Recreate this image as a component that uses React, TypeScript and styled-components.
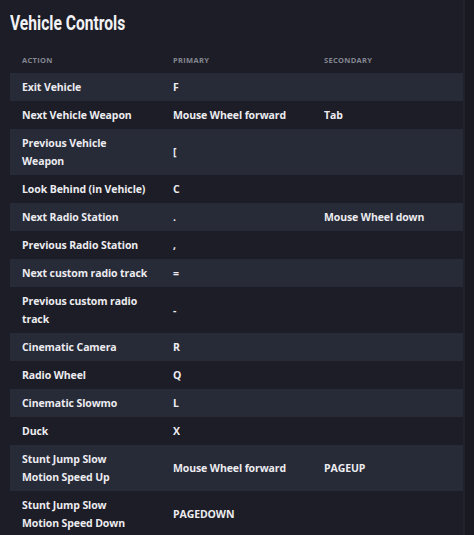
import React from "react";
import styled, { createGlobalStyle } from "styled-components";

const Global = createGlobalStyle`
  html, body { margin: 0; padding: 0; background: #1c1d26; }
  body { width: 474px; height: 535px; overflow: hidden; }
`;

const Page = styled.div`
  display: flex;
  width: 474px;
  height: 535px;
  background: #1c1d26;
  overflow: hidden;
`;

const Main = styled.div`
  width: 463px;
  padding: 10px 0 0 10px;
  box-sizing: border-box;
`;

const Gutter = styled.div`
  flex: 1;
  background: #191a21;
  border-left: 2px solid #21232c;
`;

const Title = styled.h2`
  margin: 0 0 12px 0;
  height: 26px;
  font-family: "Roboto", "DejaVu Sans", sans-serif;
  font-weight: 700;
  font-size: 20px;
  line-height: 26px;
  color: #f2f2f5;
`;

const TitleText = styled.span`
  display: inline-block;
  transform: scaleX(0.78);
  transform-origin: left center;
  white-space: nowrap;
`;

const Table = styled.table`
  width: 453px;
  border-collapse: collapse;
  table-layout: fixed;
  font-family: "Open Sans", "Noto Sans", sans-serif;
`;

const Th = styled.th`
  text-align: left;
  padding: 6px 12px 7px;
  font-size: 7.5px;
  font-weight: 700;
  letter-spacing: 0.3px;
  color: #858792;
  text-transform: uppercase;
  line-height: 12px;
`;

const Row = styled.tr<{ $striped: boolean }>`
  background: ${(p) => (p.$striped ? "#272a37" : "transparent")};
`;

const Td = styled.td`
  padding: 5px 12px;
  font-size: 10.5px;
  font-weight: 700;
  letter-spacing: -0.1px;
  line-height: 18px;
  color: #ececf0;
  vertical-align: middle;
  white-space: pre-line;
`;

const rows: [string, string, string][] = [
  ["Exit Vehicle", "F", ""],
  ["Next Vehicle Weapon", "Mouse Wheel forward", "Tab"],
  ["Previous Vehicle\nWeapon", "[", ""],
  ["Look Behind (in Vehicle)", "C", ""],
  ["Next Radio Station", ".", "Mouse Wheel down"],
  ["Previous Radio Station", ",", ""],
  ["Next custom radio track", "=", ""],
  ["Previous custom radio\ntrack", "-", ""],
  ["Cinematic Camera", "R", ""],
  ["Radio Wheel", "Q", ""],
  ["Cinematic Slowmo", "L", ""],
  ["Duck", "X", ""],
  ["Stunt Jump Slow\nMotion Speed Up", "Mouse Wheel forward", "PAGEUP"],
  ["Stunt Jump Slow\nMotion Speed Down", "PAGEDOWN", ""],
];

export default function App() {
  return (
    <Page>
      <Global />
      <Main>
        <Title>
          <TitleText>Vehicle Controls</TitleText>
        </Title>
        <Table>
          <thead>
            <tr>
              <Th>Action</Th>
              <Th>Primary</Th>
              <Th>Secondary</Th>
            </tr>
          </thead>
          <tbody>
            {rows.map((r, i) => (
              <Row key={r[0]} $striped={i % 2 === 0}>
                <Td>{r[0]}</Td>
                <Td>{r[1]}</Td>
                <Td>{r[2]}</Td>
              </Row>
            ))}
          </tbody>
        </Table>
      </Main>
      <Gutter />
    </Page>
  );
}
